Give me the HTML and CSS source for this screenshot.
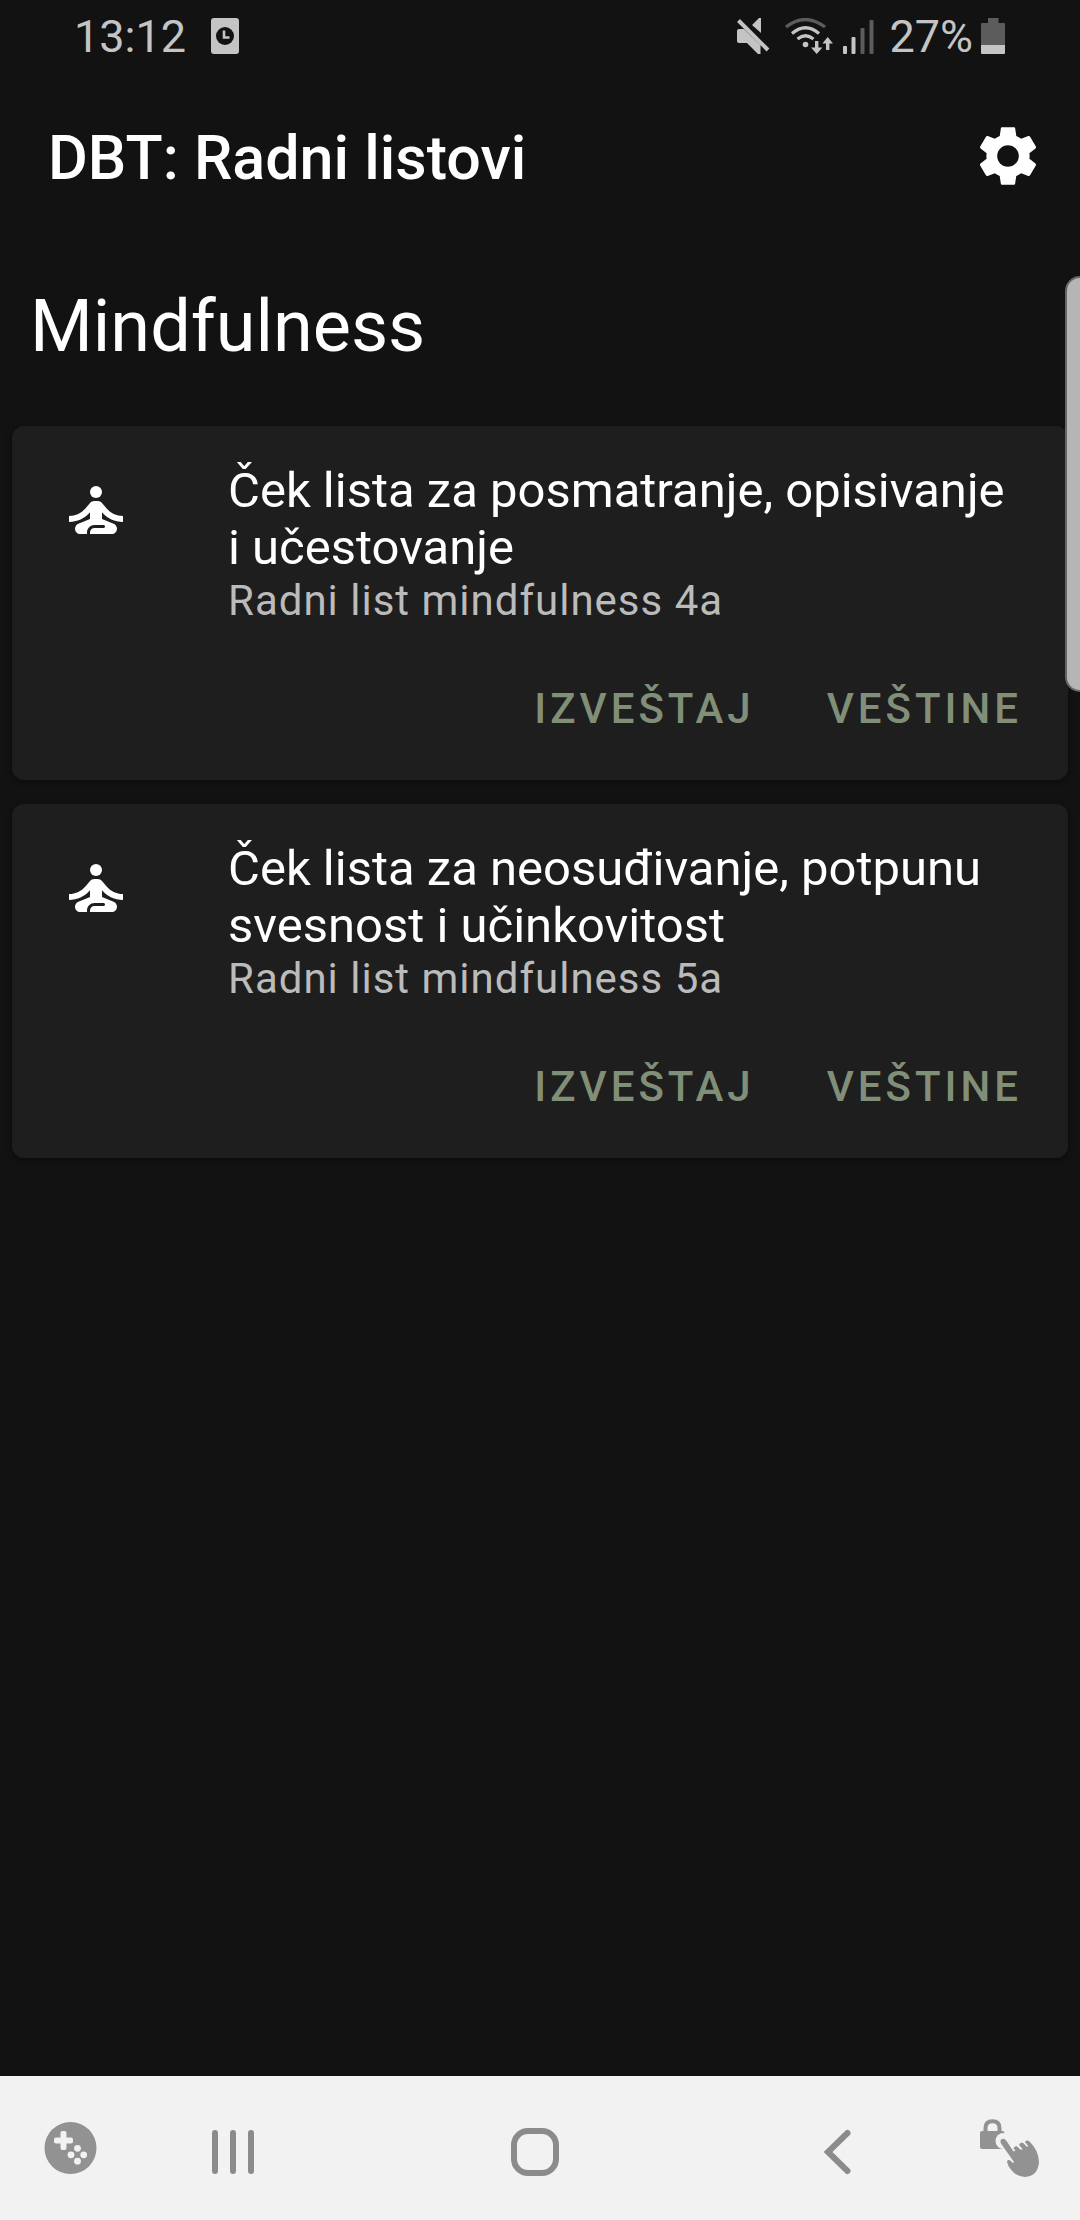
FILE: index.html
```html
<!DOCTYPE html>
<html lang="sr-Latn">
<head>
<meta charset="utf-8">
<meta name="viewport" content="width=device-width, initial-scale=1">
<title>DBT: Radni listovi</title>
<link rel="stylesheet" href="styles.css">
</head>
<body>
<svg class="symbols" aria-hidden="true">
  <symbol id="meditation" viewBox="0 0 24 24">
    <circle cx="12" cy="6" r="2"/>
    <path d="M21 16v-2c-2.24 0-4.16-.96-5.6-2.68l-1.34-1.6C13.68 9.26 13.12 9 12.53 9h-1.05c-.6 0-1.15.26-1.53.72l-1.34 1.6C7.16 13.04 5.24 14 3 14v2c2.77 0 5.19-1.17 7-3.25V15l-3.88 1.55C5.45 16.82 5 17.48 5 18.21 5 19.2 5.8 20 6.79 20H9v-.5c0-1.38 1.12-2.5 2.5-2.5h3c.28 0 .5.22.5.5s-.22.5-.5.5h-3c-.83 0-1.5.67-1.5 1.5v.5h7.21c.99 0 1.79-.8 1.79-1.79 0-.73-.45-1.39-1.12-1.66L14 15v-2.25C15.81 14.83 18.23 16 21 16z"/>
  </symbol>
</svg>

<div class="status-bar">
  <div class="status-left">
    <span class="status-text">13:12</span>
    <svg width="30" height="36" viewBox="0 0 30 36" aria-hidden="true">
      <rect x="1" y="0" width="28" height="36" rx="3" fill="#c4c4c4"/>
      <circle cx="15" cy="18" r="9" fill="#121212"/>
      <path d="M14 12.500v7h5.500" fill="none" stroke="#c4c4c4" stroke-width="2.600"/>
    </svg>
  </div>
  <div class="status-right">
    <svg class="mute" width="34" height="36" viewBox="0 0 34 36" aria-hidden="true">
      <path d="M3 11H8L24.500 27V36H22L11 25H3Q1 25 1 23V13Q1 11 3 11ZM16 7L23 0H25V15Z" fill="#c4c4c4"/>
      <path d="M2.500 2.500L32 32" stroke="#c4c4c4" stroke-width="4"/>
    </svg>
    <svg class="wifi" width="48" height="36" viewBox="0 0 48 36" aria-hidden="true">
      <path d="M1 9Q20-6 40 9" fill="none" stroke="#5c5c5c" stroke-width="3.200"/>
      <path d="M7 15.500Q20.500 4 34 15.500M12.500 21Q20.500 14.500 28.500 21" fill="none" stroke="#c4c4c4" stroke-width="3.200"/>
      <circle cx="20.500" cy="26.500" r="2.800" fill="#c4c4c4"/>
      <path d="M30 23h3.400v6.500h4L31.700 36 26 29.500h4ZM42.700 19L48 25.500h-3.600V32H41v-6.500h-3.600Z" fill="#c4c4c4"/>
    </svg>
    <svg class="signal" width="32" height="36" viewBox="0 0 32 36" aria-hidden="true">
      <rect x="1" y="28" width="4" height="8" rx="1" fill="#c4c4c4"/>
      <rect x="9.500" y="19" width="4" height="17" rx="1" fill="#c4c4c4"/>
      <rect x="18.500" y="10" width="4" height="26" rx="1" fill="#5c5c5c"/>
      <rect x="27.500" y="2" width="4" height="34" rx="1" fill="#5c5c5c"/>
    </svg>
    <span class="status-text">27%</span>
    <svg class="battery" width="24" height="36" viewBox="0 0 24 36" aria-hidden="true">
      <path d="M7 0h10.500v5H23q1 0 1 1v21H0V6q0-1 1-1h6Z" fill="#5c5c5c"/>
      <path d="M0 27h24v8q0 1-1 1H1q-1 0-1-1Z" fill="#c4c4c4"/>
    </svg>
  </div>
</div>

<header class="app-bar">
  <h1 class="app-title">DBT: Radni listovi</h1>
  <button class="icon-button" type="button" aria-label="Podešavanja">
    <svg width="72" height="72" viewBox="0 0 24 24" fill="#fff" aria-hidden="true">
      <path d="M19.140 12.940c.04-.3.06-.61.06-.94 0-.32-.02-.64-.07-.94l2.030-1.580c.18-.14.23-.41.12-.61l-1.920-3.320c-.12-.22-.37-.29-.59-.22l-2.390.96c-.5-.38-1.030-.7-1.620-.94l-.36-2.540c-.04-.24-.24-.41-.48-.41h-3.840c-.24 0-.43.17-.47.41l-.36 2.540c-.59.24-1.130.57-1.620.94l-2.390-.96c-.22-.08-.47 0-.59.22L2.740 8.870c-.12.21-.08.47.12.61l2.030 1.580c-.05.3-.09.63-.09.94s.02.64.07.94l-2.030 1.580c-.18.14-.23.41-.12.61l1.920 3.320c.12.22.37.29.59.22l2.390-.96c.5.38 1.030.7 1.620.94l.36 2.540c.05.24.24.41.48.41h3.840c.24 0 .44-.17.47-.41l.36-2.540c.59-.24 1.130-.56 1.620-.94l2.390.96c.22.08.47 0 .59-.22l1.920-3.320c.12-.22.07-.47-.12-.61l-2.010-1.580zM12 15.600c-1.980 0-3.600-1.620-3.600-3.600s1.620-3.600 3.600-3.600 3.600 1.620 3.600 3.600-1.620 3.600-3.600 3.600z"/>
    </svg>
  </button>
</header>

<main class="content">
  <h2 class="section-title">Mindfulness</h2>
  <article class="card">
    <div class="card-body">
      <svg class="card-icon" width="72" height="72" aria-hidden="true"><use href="#meditation"/></svg>
      <div class="card-text">
        <h3 class="card-title">Ček lista za posmatranje, opisivanje i učestovanje</h3>
        <p class="card-subtitle">Radni list mindfulness 4a</p>
      </div>
    </div>
    <div class="card-actions">
      <button class="text-button" type="button">IZVEŠTAJ</button>
      <button class="text-button" type="button">VEŠTINE</button>
    </div>
  </article>
  <article class="card">
    <div class="card-body">
      <svg class="card-icon" width="72" height="72" aria-hidden="true"><use href="#meditation"/></svg>
      <div class="card-text">
        <h3 class="card-title">Ček lista za neosuđivanje, potpunu svesnost i učinkovitost</h3>
        <p class="card-subtitle">Radni list mindfulness 5a</p>
      </div>
    </div>
    <div class="card-actions">
      <button class="text-button" type="button">IZVEŠTAJ</button>
      <button class="text-button" type="button">VEŠTINE</button>
    </div>
  </article>
</main>

<div class="edge-handle"></div>

<nav class="nav-bar" aria-label="Sistem">
  <button class="nav-button" type="button" aria-label="Game Tools">
    <svg width="53" height="58" viewBox="0 0 53 58" aria-hidden="true">
      <circle cx="26.500" cy="29" r="26" fill="#929292"/>
      <g fill="#f2f2f2">
        <rect x="16.500" y="12" width="6" height="19" rx="2"/>
        <rect x="10" y="18.500" width="19" height="6" rx="2"/>
        <circle cx="33.500" cy="29.300" r="3.400"/>
        <circle cx="27" cy="35.800" r="3.400"/>
        <circle cx="39.700" cy="35.800" r="3.400"/>
        <circle cx="33.500" cy="42.200" r="3.400"/>
      </g>
    </svg>
  </button>
  <div class="nav-main">
    <button class="nav-button" type="button" aria-label="Nedavno">
      <svg width="48" height="48" viewBox="0 0 48 48" fill="none" stroke="#8b8b8b" stroke-width="6" stroke-linecap="round" aria-hidden="true">
        <path d="M6 5v38M24 5v38M42 5v38"/>
      </svg>
    </button>
    <button class="nav-button" type="button" aria-label="Početna">
      <svg width="48" height="48" viewBox="0 0 48 48" fill="none" stroke="#8b8b8b" stroke-width="6" aria-hidden="true">
        <rect x="3" y="3" width="42" height="42" rx="14"/>
      </svg>
    </button>
    <button class="nav-button" type="button" aria-label="Nazad">
      <svg width="48" height="48" viewBox="0 0 48 48" fill="none" stroke="#8b8b8b" stroke-width="6" stroke-linecap="round" aria-hidden="true">
        <path d="M34.500 5L15 24l19.500 19"/>
      </svg>
    </button>
  </div>
  <button class="nav-button" type="button" aria-label="Zaključaj dodir">
    <svg width="59" height="58" viewBox="0 0 59 58" aria-hidden="true">
      <path d="M5.500 14V9Q5.500 2.200 12.500 2.200T19.500 9V14" fill="none" stroke="#929292" stroke-width="4"/>
      <rect x="0" y="12" width="24.500" height="18" rx="2" fill="#929292"/>
      <circle cx="23.500" cy="22" r="8" fill="#f2f2f2"/>
      <path d="M21 24.500Q19.500 21 22 20Q24.500 18.800 26.500 22L33.500 32.500 35.500 31.500 33.500 29.500Q34 27 36.500 27L41 31 42.500 30 39 26Q40 23 43 23.800L47 28 48.200 27 45 23Q46.500 20.500 49.500 22.500Q58.500 31 59 43Q58 57 45 58Q35 58 28.500 47L27 43Q27 40.500 29.500 41L33 44 34 43Z" fill="#929292"/>
    </svg>
  </button>
</nav>
</body>
</html>
```

FILE: styles.css
```css
* {
  box-sizing: border-box;
}

body {
  margin: 0;
  min-height: 100vh;
  display: flex;
  flex-direction: column;
  background: #121212;
  color: #fff;
  font-family: Roboto, "Noto Sans", sans-serif;
}

h1, h2, h3, p {
  margin: 0;
}

button {
  margin: 0;
  padding: 0;
  border: 0;
  background: none;
  color: inherit;
  font: inherit;
  cursor: pointer;
}

svg {
  display: block;
  flex: none;
}

.symbols {
  position: absolute;
  width: 0;
  height: 0;
}

/* System status bar */
.status-bar {
  display: flex;
  align-items: center;
  justify-content: space-between;
  height: 72px;
  padding: 0 75px 0 74px;
  color: #c4c4c4;
  font-size: 45px;
  line-height: 54px;
}

.status-left,
.status-right {
  display: flex;
  align-items: center;
}

.status-left {
  gap: 24px;
}

.status-text {
  padding-top: 2px;
}

.wifi {
  margin-left: 15px;
}

.signal {
  margin-left: 9px;
  margin-right: 15px;
}

.battery {
  margin-left: 8px;
}

/* App bar */
.app-bar {
  display: flex;
  align-items: center;
  justify-content: space-between;
  min-height: 168px;
  padding: 0 36px 0 48px;
}

.app-title {
  padding-top: 4px;
  font-size: 61px;
  font-weight: 500;
  line-height: 72px;
}

/* Worksheet list */
.content {
  flex: 1;
  display: flex;
  flex-direction: column;
  gap: 24px;
  padding: 45px 12px;
}

.section-title {
  padding: 0 18px 33px;
  font-size: 72px;
  font-weight: 400;
  line-height: 84px;
}

.card {
  border-radius: 12px;
  background: #1e1e1e;
  box-shadow: 0 2px 6px rgba(0, 0, 0, 0.4);
}

.card-body {
  display: flex;
  gap: 96px;
  padding: 36px 48px 0;
}

.card-icon {
  margin-top: 12px;
  fill: #fff;
}

.card-title {
  font-size: 49px;
  font-weight: 400;
  line-height: 57px;
}

.card-subtitle {
  color: #bbb;
  font-size: 42px;
  line-height: 50px;
  letter-spacing: 1px;
}

.card-actions {
  display: flex;
  align-items: center;
  justify-content: flex-end;
  gap: 24px;
  padding: 28px 22px 18px;
}

.text-button {
  height: 108px;
  padding: 0 24px;
  color: #818f79;
  font-size: 42px;
  font-weight: 500;
  letter-spacing: 4px;
}

/* Edge panel handle floating over the page */
.edge-handle {
  position: fixed;
  top: 276px;
  right: 0;
  width: 15px;
  height: 416px;
  border: 2px solid #666;
  border-right: 0;
  border-radius: 15px 0 0 15px;
  background: #b5b5b5;
}

/* System navigation */
.nav-bar {
  display: flex;
  align-items: center;
  min-height: 144px;
  padding: 0 41px 0 44px;
  background: #f2f2f2;
}

.nav-main {
  flex: 1;
  display: flex;
  justify-content: space-between;
  padding: 8px 119px 0 112px;
}
```
